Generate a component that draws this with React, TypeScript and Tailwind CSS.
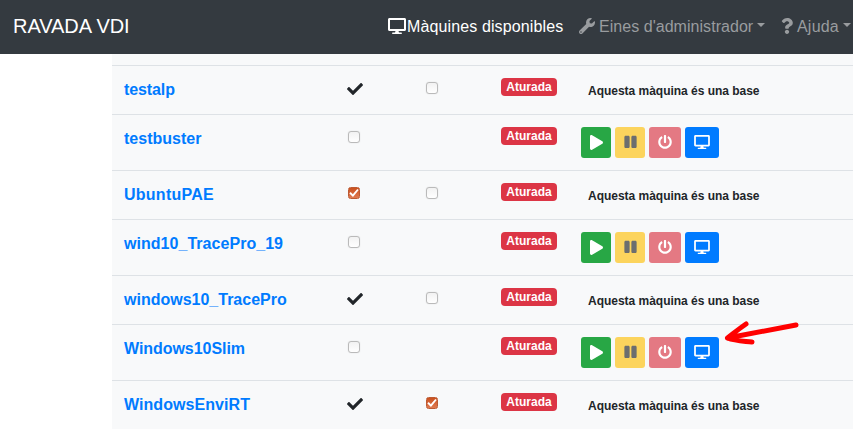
import React from "react";
import { FaCheck, FaDesktop, FaPause, FaPlay, FaPowerOff, FaQuestion, FaWrench } from "react-icons/fa";

type Mark = "tick" | "on" | "off" | "none";
type Machine = { name: string; base: Mark; visible: Mark; isBase: boolean; tracking: string };

const machines: Machine[] = [
  { name: "testalp", base: "tick", visible: "off", isBase: true, tracking: "tracking-[-0.1px]" },
  { name: "testbuster", base: "off", visible: "none", isBase: false, tracking: "" },
  { name: "UbuntuPAE", base: "on", visible: "off", isBase: true, tracking: "tracking-[0.25px]" },
  { name: "wind10_TracePro_19", base: "off", visible: "none", isBase: false, tracking: "tracking-[0.04px]" },
  { name: "windows10_TracePro", base: "tick", visible: "off", isBase: true, tracking: "" },
  { name: "Windows10Slim", base: "off", visible: "none", isBase: false, tracking: "tracking-[-0.05px]" },
  { name: "WindowsEnviRT", base: "tick", visible: "on", isBase: true, tracking: "tracking-[0.06px]" },
];

function MarkCell({ mark }: { mark: Mark }) {
  if (mark === "none") return <div />;
  if (mark === "tick") return <FaCheck className="mt-[3px] -ml-px h-4 w-4 text-[#212529]" />;
  if (mark === "on")
    return (
      <div className="mt-1 flex h-3 w-3 items-center justify-center rounded-[2.5px] border border-[#bd5a32] bg-linear-to-b from-[#c9501c] to-[#e07a50]">
        <svg viewBox="0 0 10 10" className="h-2.5 w-2.5 shrink-0" fill="none" stroke="#fff" strokeWidth="1.9">
          <path d="M1 4.8 3.9 7.6 9 1.5" />
        </svg>
      </div>
    );
  return (
    <div className="mt-1 h-3 w-3 rounded-[3px] border border-[#bababa] bg-linear-to-b from-[#f2f2f2] to-white shadow-[0_0_1px_#ccc]" />
  );
}

function Caret({ className }: { className: string }) {
  return (
    <span className={`mb-1 border-x-[4.8px] border-t-[4.8px] border-x-transparent border-t-current ${className}`} />
  );
}

function Actions() {
  return (
    <div className="flex h-[31px] gap-1 text-sm text-white">
      <button className="flex w-[30px] items-center justify-center rounded-[3px] bg-[#28a745] pb-px">
        <FaPlay className="h-[15px] w-[13px]" />
      </button>
      <button className="flex w-[30px] items-center justify-center rounded-[3px] bg-[#fcd45d] pb-px text-[#6c6e6f]">
        <FaPause className="h-3.5 w-[13px]" />
      </button>
      <button className="flex w-8 items-center justify-center rounded-[3px] bg-[#e47983] pb-px">
        <FaPowerOff />
      </button>
      <button className="flex w-[34px] items-center justify-center rounded-[3px] bg-[#007bff] pb-px">
        <FaDesktop className="h-3.5 w-4" />
      </button>
    </div>
  );
}

export default function App() {
  return (
    <div className="relative h-[448px] w-[853px] overflow-hidden bg-white font-['Liberation_Sans',Arial,sans-serif] text-[#212529]">
      <header className="flex h-[54px] items-center bg-[#343a40] pl-[13px] text-base whitespace-nowrap text-[#999c9f]">
        <span className="w-[375px] shrink-0 pb-0.5 text-xl tracking-[-0.05px] text-white">RAVADA VDI</span>
        <nav className="flex items-center">
          <a className="flex w-[191px] items-center text-white">
            <FaDesktop className="mb-0.5 h-4 w-[18px] shrink-0" />
            <span className="ml-px tracking-[0.12px]">Màquines disponibles</span>
          </a>
          <a className="flex w-[202px] items-center">
            <FaWrench className="mb-0.5 h-4 w-4 shrink-0" />
            <span className="ml-1 tracking-[0.04px]">Eines d'administrador</span>
            <Caret className="ml-[3.5px]" />
          </a>
          <a className="flex items-center">
            <FaQuestion className="mb-0.5 h-4 w-3 shrink-0" />
            <span className="ml-1 tracking-[0.2px]">Ajuda</span>
            <Caret className="ml-1" />
          </a>
        </nav>
      </header>
      <main className="ml-28 bg-[#f8f9fa] pt-[11px]">
        {machines.map((m) => (
          <div key={m.name} className="grid grid-cols-[224px_78px_75px_80px_1fr] border-t border-[#dee2e6] py-3 pl-3">
            <a className={`text-base leading-6 font-bold text-[#007bff] ${m.tracking}`}>{m.name}</a>
            <MarkCell mark={m.base} />
            <MarkCell mark={m.visible} />
            <span className="flex h-[18px] w-14 items-center justify-center rounded bg-[#dc3545] text-xs font-bold text-white">
              Aturada
            </span>
            {m.isBase ? (
              <strong className="ml-[7px] h-6 text-xs leading-[26px] font-bold tracking-[-0.02px]">
                Aquesta màquina és una base
              </strong>
            ) : (
              <Actions />
            )}
          </div>
        ))}
      </main>
      {/* Hand-drawn arrow laid over the table */}
      <svg
        className="absolute top-[315px] left-[715px]"
        width="95"
        height="40"
        fill="none"
        stroke="#f00"
        strokeWidth="5"
        strokeLinecap="round"
        strokeLinejoin="round"
      >
        <path d="M81 10C60 14 38 18 12.5 23M31 9C25 13 19 18 12.5 23M12.5 23C20 26 28 26 37 27" />
      </svg>
    </div>
  );
}
